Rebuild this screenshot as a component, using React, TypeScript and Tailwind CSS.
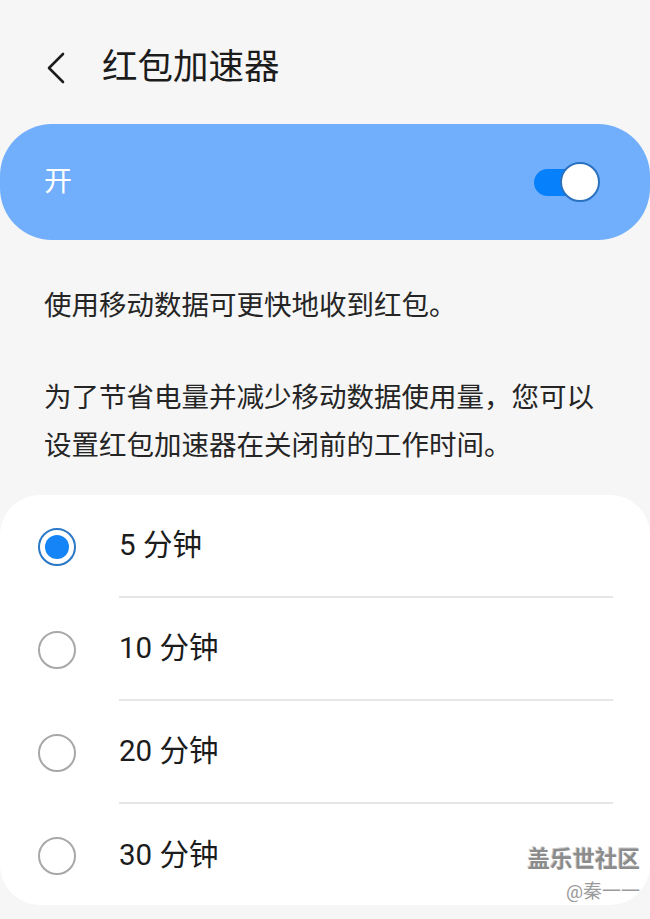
const options = ['5 分钟', '10 分钟', '20 分钟', '30 分钟'];

function Radio({ checked }: { checked: boolean }) {
  if (checked) {
    return (
      <span className="flex h-[38px] w-[38px] items-center justify-center rounded-full border-[2px] border-[#2a78c6]">
        <span className="h-[24px] w-[24px] rounded-full bg-[#1584f6]" />
      </span>
    );
  }
  return <span className="block h-[38px] w-[38px] rounded-full border-[2px] border-[#a8a8a8]" />;
}

export default function App() {
  return (
    <div
      className="relative h-[919px] w-[650px] overflow-hidden bg-[#f6f6f6] text-[#1c1c1c]"
      style={{ fontFamily: 'Roboto, "Noto Sans CJK SC", sans-serif' }}
    >
      <header className="flex h-[124px] items-center pl-[44px] pt-[12px]">
        <svg width="24" height="34" viewBox="0 0 24 34" fill="none">
          <polyline points="19,3 5,17 19,31" stroke="#1c1c1c" strokeWidth="2.6" strokeLinecap="round" strokeLinejoin="round" />
        </svg>
        <h1 className="ml-[34px] text-[35.5px] leading-none">红包加速器</h1>
      </header>

      <div className="flex h-[116px] items-center justify-between rounded-[52px] bg-[#71aefb] pl-[44px] pr-[50px]">
        <span className="text-[28px] text-white">开</span>
        <div className="relative h-[40px] w-[66px]">
          <span className="absolute left-0 top-[7px] h-[27px] w-[50px] rounded-full bg-[#0781fb]" />
          <span className="absolute right-0 top-0 h-[40px] w-[40px] rounded-full border-[2px] border-[#2a72c0] bg-white" />
        </div>
      </div>

      <div className="px-[44px] pt-[42px] text-[27.5px] leading-[48px] text-[#252525]">
        <p>使用移动数据可更快地收到红包。</p>
        <p className="mt-[44px]">
          为了节省电量并减少移动数据使用量，您可以
          <br />
          设置红包加速器在关闭前的工作时间。
        </p>
      </div>

      <div className="mt-[25px] h-[410px] rounded-[40px] bg-white pl-[38px] pr-[37px]">
        {options.map((label, i) => (
          <div key={label} className="flex h-[103px] items-center">
            <Radio checked={i === 0} />
            <div
              className={
                'ml-[43px] flex h-full flex-1 items-center text-[29.5px] ' +
                (i < options.length - 1 ? 'border-b-[2px] border-[#e6e6e6]' : '')
              }
            >
              {label}
            </div>
          </div>
        ))}
      </div>

      <div className="absolute right-[10px] top-[848px] flex flex-col items-end leading-none text-[#8c8c8c]">
        <span className="text-[22.5px] font-bold [text-shadow:1px_1px_0_#ffffff,-1px_-1px_0_#cfcfcf]">盖乐世社区</span>
        <span className="mt-[11px] text-[19px] text-[#9a9a9a]">@秦一一</span>
      </div>
    </div>
  );
}
